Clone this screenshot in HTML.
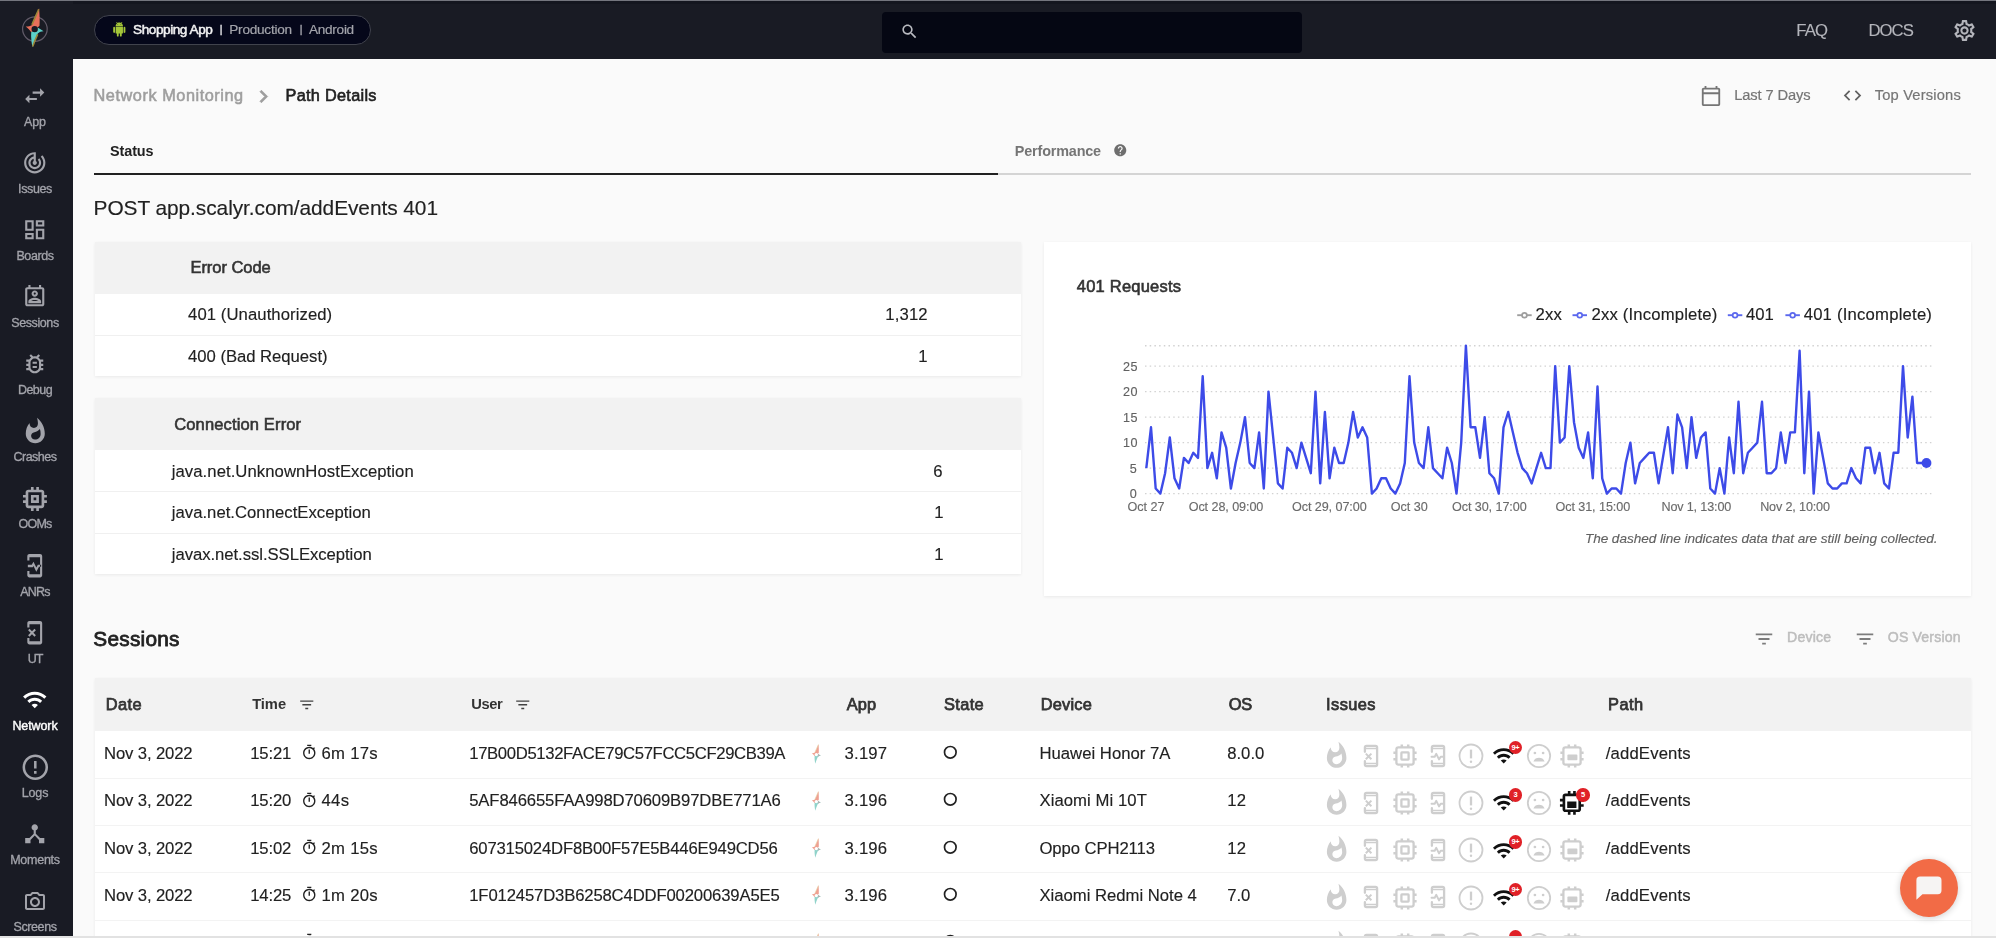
<!DOCTYPE html>
<html lang="en"><head><meta charset="utf-8"><title>Path Details</title>
<style>
html,body{margin:0;padding:0}
body{width:1996px;height:938px;overflow:hidden;background:#fafafa;position:relative;font-family:"Liberation Sans", sans-serif;}
.r{position:absolute}
.tl{position:absolute;left:0;top:0;width:1996px;height:938px;will-change:transform}
.t{position:absolute;white-space:pre;line-height:24px;}
.ic{position:absolute;display:block;overflow:visible}
svg text{font-family:"Liberation Sans", sans-serif}
</style></head>
<body>
<div class="r" style="left:0px;top:0px;width:1996px;height:59.3px;background:#191b24;"></div>
<div class="r" style="left:0px;top:0px;width:72.5px;height:938px;background:#191b24;"></div>
<div class="r" style="left:0px;top:0px;width:1996px;height:1px;background:#74767e;"></div>
<div class="r" style="left:72.5px;top:1px;width:1923.5px;height:3px;background:#14161f;"></div>
<div class="r" style="left:94px;top:15px;width:274.5px;height:27.5px;border:1px solid #41434d;border-radius:15px;background:#05071a"></div>
<svg class="ic" style="left:111.70px;top:22.30px" width="14.60" height="14.60" viewBox="0 0 24 24" fill="#a4c639"><path d="M6 18c0 .55.45 1 1 1h1v3.5c0 .83.67 1.5 1.5 1.5s1.5-.67 1.5-1.5V19h2v3.5c0 .83.67 1.5 1.5 1.5s1.5-.67 1.5-1.5V19h1c.55 0 1-.45 1-1V8H6v10zM3.5 8C2.67 8 2 8.67 2 9.5v7c0 .83.67 1.5 1.5 1.5S5 17.33 5 16.5v-7C5 8.67 4.33 8 3.5 8zm17 0c-.83 0-1.5.67-1.5 1.5v7c0 .83.67 1.5 1.5 1.5s1.5-.67 1.5-1.5v-7c0-.83-.67-1.5-1.5-1.5zm-4.970-5.840l1.300-1.300c.2-.2.2-.51 0-.71-.2-.2-.51-.2-.71 0l-1.480 1.480C13.850 1.230 12.950 1 12 1c-.96 0-1.860.23-2.660.63L7.850.15c-.2-.2-.51-.2-.71 0-.2.2-.2.51 0 .71l1.310 1.310C6.970 3.260 6 5.010 6 7h12c0-1.990-.97-3.750-2.470-4.840zM10 5H9V4h1v1zm5 0h-1V4h1v1z"/></svg>
<div class="r" style="left:882px;top:12px;width:420px;height:41px;background:#050713;border-radius:4px"></div>
<svg class="ic" style="left:900.00px;top:22.00px" width="19.00" height="19.00" viewBox="0 0 24 24" fill="#b9bac0"><path d="M15.5 14h-.79l-.28-.27C15.41 12.59 16 11.11 16 9.5 16 5.91 13.09 3 9.5 3S3 5.91 3 9.5 5.91 16 9.5 16c1.61 0 3.09-.59 4.23-1.57l.27.28v.79l5 4.99L20.49 19l-4.99-5zm-6 0C7.01 14 5 11.99 5 9.5S7.01 5 9.5 5 14 7.01 14 9.5 11.99 14 9.5 14z"/></svg>
<svg class="ic" style="left:1952.10px;top:18.20px" width="25.00" height="25.00" viewBox="0 0 24 24" fill="#b4b5bb"><path d="M19.43 12.98c.04-.32.07-.64.07-.98 0-.34-.03-.66-.07-.98l2.11-1.65c.19-.15.24-.42.12-.64l-2-3.46c-.09-.16-.26-.25-.44-.25-.06 0-.12.01-.17.03l-2.49 1c-.52-.4-1.08-.73-1.69-.98l-.38-2.65C14.46 2.18 14.25 2 14 2h-4c-.25 0-.46.18-.49.42l-.38 2.65c-.61.25-1.17.59-1.69.98l-2.49-1c-.06-.02-.12-.03-.18-.03-.17 0-.34.09-.43.25l-2 3.46c-.13.22-.07.49.12.64l2.11 1.65c-.04.32-.07.65-.07.98 0 .33.03.66.07.98l-2.11 1.65c-.19.15-.24.42-.12.64l2 3.46c.09.16.26.25.44.25.06 0 .12-.01.17-.03l2.49-1c.52.4 1.08.73 1.69.98l.38 2.65c.03.24.24.42.49.42h4c.25 0 .46-.18.49-.42l.38-2.65c.61-.25 1.17-.59 1.69-.98l2.49 1c.06.02.12.03.18.03.17 0 .34-.09.43-.25l2-3.46c.12-.22.07-.49-.12-.64l-2.11-1.65zm-1.98-1.71c.04.31.05.52.05.73 0 .21-.02.43-.05.73l-.14 1.13.89.7 1.08.84-.7 1.21-1.27-.51-1.04-.42-.9.68c-.43.32-.84.56-1.25.73l-1.06.43-.16 1.13-.2 1.35h-1.4l-.19-1.35-.16-1.13-1.06-.43c-.43-.18-.83-.41-1.23-.71l-.91-.7-1.06.43-1.27.51-.7-1.21 1.08-.84.89-.7-.14-1.13c-.03-.31-.05-.54-.05-.74s.02-.43.05-.73l.14-1.13-.89-.7-1.08-.84.7-1.21 1.27.51 1.04.42.9-.68c.43-.32.84-.56 1.25-.73l1.06-.43.16-1.13.2-1.35h1.39l.19 1.35.16 1.13 1.06.43c.43.18.83.41 1.23.71l.91.7 1.06-.43 1.27-.51.7 1.21-1.07.85-.89.7.14 1.13zM12 8c-2.21 0-4 1.79-4 4s1.79 4 4 4 4-1.79 4-4-1.79-4-4-4zm0 6c-1.1 0-2-.9-2-2s.9-2 2-2 2 .9 2 2-.9 2-2 2z"/></svg>
<svg class="ic" style="left:22.25px;top:83.05px" width="25.50" height="25.50" viewBox="0 0 24 24" fill="#a3a4ab"><path d="M6.99 11L3 15l3.99 4v-3H14v-2H6.99v-3zM21 9l-3.99-4v3H10v2h7.01v3L21 9z"/></svg>
<svg class="ic" style="left:22.25px;top:150.15px" width="25.50" height="25.50" viewBox="0 0 24 24" fill="#a3a4ab"><path d="M19.07 4.93l-1.41 1.41C19.1 7.79 20 9.79 20 12c0 4.42-3.58 8-8 8s-8-3.58-8-8c0-4.08 3.05-7.44 7-7.93v2.02C8.16 6.57 6 9.03 6 12c0 3.31 2.69 6 6 6s6-2.69 6-6c0-1.66-.67-3.16-1.76-4.24l-1.41 1.41C15.55 9.9 16 10.9 16 12c0 2.21-1.79 4-4 4s-4-1.79-4-4c0-1.86 1.28-3.41 3-3.86v2.14c-.6.35-1 .98-1 1.72 0 1.1.9 2 2 2s2-.9 2-2c0-.74-.4-1.38-1-1.72V2h-1C6.48 2 2 6.48 2 12s4.48 10 10 10 10-4.48 10-10c0-2.76-1.12-5.26-2.93-7.07z"/></svg>
<svg class="ic" style="left:22.25px;top:217.25px" width="25.50" height="25.50" viewBox="0 0 24 24" fill="#a3a4ab"><path d="M19 5v2h-4V5h4M9 5v6H5V5h4m10 8v6h-4v-6h4M9 17v2H5v-2h4M21 3h-8v6h8V3zM11 3H3v10h8V3zm10 8h-8v10h8V11zm-10 4H3v6h8v-6z"/></svg>
<svg class="ic" style="left:22.25px;top:284.35px" width="25.50" height="25.50" viewBox="0 0 24 24" fill="#a3a4ab"><path d="M19 3h-1V1h-2v2H8V1H6v2H5c-1.11 0-2 .9-2 2v14c0 1.1.89 2 2 2h14c1.1 0 2-.9 2-2V5c0-1.1-.9-2-2-2zm0 16H5V5h14v14zM12 6c-1.65 0-3 1.35-3 3s1.35 3 3 3 3-1.35 3-3-1.35-3-3-3zm0 4c-.55 0-1-.45-1-1s.45-1 1-1 1 .45 1 1-.45 1-1 1zm6 6.58c0-2.5-3.97-3.58-6-3.58s-6 1.08-6 3.58V18h12v-1.42zM8.48 16c.74-.51 2.23-1 3.52-1s2.78.49 3.52 1H8.48z"/></svg>
<svg class="ic" style="left:22.25px;top:351.45px" width="25.50" height="25.50" viewBox="0 0 24 24" fill="#a3a4ab"><path d="M20 8h-2.81c-.45-.78-1.07-1.45-1.82-1.96L17 4.41 15.59 3l-2.17 2.17C12.96 5.06 12.49 5 12 5s-.96.06-1.41.17L8.41 3 7 4.41l1.62 1.63C7.88 6.55 7.26 7.22 6.81 8H4v2h2.09c-.05.33-.09.66-.09 1v1H4v2h2v1c0 .34.04.67.09 1H4v2h2.81c1.04 1.79 2.97 3 5.19 3s4.15-1.21 5.19-3H20v-2h-2.09c.05-.33.09-.66.09-1v-1h2v-2h-2v-1c0-.34-.04-.67-.09-1H20V8zm-4 4v3c0 .22-.03.47-.07.7l-.1.65-.37.65c-.72 1.24-2.04 2-3.46 2s-2.74-.77-3.46-2l-.37-.64-.1-.65C8.03 15.48 8 15.23 8 15v-4c0-.23.03-.48.07-.7l.1-.65.37-.65c.3-.52.72-.97 1.21-1.31l.57-.39.74-.18c.31-.08.63-.12.94-.12.32 0 .63.04.95.12l.68.16.61.42c.5.34.91.78 1.21 1.31l.38.65.1.65c.04.22.07.47.07.69v1zm-6 2h4v2h-4zm0-4h4v2h-4z"/></svg>
<svg class="ic" style="left:20.72px;top:417.02px" width="28.56" height="28.56" viewBox="0 0 24 24" fill="#a3a4ab"><path d="M13.5.67s.74 2.65.74 4.8c0 2.06-1.35 3.73-3.41 3.73-2.07 0-3.63-1.67-3.63-3.73l.03-.36C5.21 7.51 4 10.62 4 14c0 4.42 3.58 8 8 8s8-3.58 8-8C20 8.61 17.41 3.8 13.5.67zM11.71 19c-1.78 0-3.22-1.4-3.22-3.14 0-1.62 1.05-2.76 2.81-3.12 1.77-.36 3.6-1.21 4.62-2.58.39 1.29.59 2.65.59 4.04 0 2.65-2.15 4.8-4.8 4.8z"/></svg>
<svg class="ic" style="left:19.06px;top:482.86px" width="31.88" height="31.88" viewBox="0 0 24 24" fill="#a3a4ab"><path d="M15 9H9v6h6V9zm-2 4h-2v-2h2v2zm8-2V9h-2V7c0-1.1-.9-2-2-2h-2V3h-2v2h-2V3H9v2H7c-1.1 0-2 .9-2 2v2H3v2h2v2H3v2h2v2c0 1.1.9 2 2 2h2v2h2v-2h2v2h2v-2h2c1.1 0 2-.9 2-2v-2h2v-2h-2v-2h2zm-4 6H7V7h10v10z"/></svg>
<svg class="ic" style="left:22.25px;top:552.75px" width="25.50" height="25.50" viewBox="0 0 24 24" fill="#a3a4ab"><path d="M17 1H7c-1.1 0-2 .9-2 2v4h2V4h10v16H7v-3H5v4c0 1.1.9 2 2 2h10c1.1 0 2-.9 2-2V3c0-1.1-.9-2-2-2zM5.500 11.100h3.700l1.600-2.800 2.700 5.400 1.400-2.600H18v1.900h-2l-2.500 4.600-2.700-5.400-.700 1.200H5.500z"/></svg>
<svg class="ic" style="left:22.25px;top:619.85px" width="25.50" height="25.50" viewBox="0 0 24 24" fill="#a3a4ab"><path d="M17 1H7c-1.1 0-2 .9-2 2v4h2V4h10v16H7v-3H5v4c0 1.1.9 2 2 2h10c1.1 0 2-.9 2-2V3c0-1.1-.9-2-2-2zM7.07 8.33 L13.07 14.33 L11.73 15.67 L5.73 9.67zM11.73 8.33 L13.07 9.67 L7.07 15.67 L5.73 14.33z"/></svg>
<svg class="ic" style="left:22.25px;top:686.95px" width="25.50" height="25.50" viewBox="0 0 24 24" fill="#ffffff"><path d="M1 9l2 2c4.97-4.97 13.03-4.97 18 0l2-2C16.93 2.93 7.08 2.93 1 9zm8 8l3 3 3-3c-1.65-1.66-4.34-1.66-6 0zm-4-4l2 2c2.76-2.76 7.24-2.76 10 0l2-2C15.14 9.14 8.87 9.14 5 13z"/></svg>
<svg class="ic" style="left:19.70px;top:751.80px" width="30.60" height="30.60" viewBox="0 0 24 24" fill="#a3a4ab"><path d="M11 15h2v2h-2zm0-8h2v6h-2zm.99-5C6.47 2 2 6.48 2 12s4.47 10 9.99 10C17.52 22 22 17.52 22 12S17.52 2 11.99 2zM12 20c-4.42 0-8-3.58-8-8s3.58-8 8-8 8 3.58 8 8-3.58 8-8 8z"/></svg>
<svg class="ic" style="left:22.25px;top:821.15px" width="25.50" height="25.50" viewBox="0 0 24 24" fill="#a3a4ab"><path d="M17 16l-4-4V8.82C14.16 8.4 15 7.3 15 6c0-1.66-1.34-3-3-3S9 4.34 9 6c0 1.3.84 2.4 2 2.82V12l-4 4H3v5h5v-3.05l4-4.2 4 4.2V21h5v-5h-4z"/></svg>
<svg class="ic" style="left:23.02px;top:890.21px" width="23.97" height="23.97" viewBox="0 0 24 24" fill="#a3a4ab"><path d="M20 4h-3.17L15 2H9L7.17 4H4c-1.1 0-2 .9-2 2v12c0 1.1.9 2 2 2h16c1.1 0 2-.9 2-2V6c0-1.1-.9-2-2-2zm0 14H4V6h4.05l1.83-2h4.24l1.83 2H20v12zM12 7c-2.76 0-5 2.24-5 5s2.24 5 5 5 5-2.24 5-5-2.24-5-5-5zm0 8c-1.65 0-3-1.35-3-3s1.35-3 3-3 3 1.35 3 3-1.35 3-3 3z"/></svg>
<svg class="ic" style="left:10px;top:0px" width="50" height="60" viewBox="10 0 50 60">
<circle cx="34.9" cy="29.1" r="12.3" fill="none" stroke="#625b69" stroke-width="1.200"/>
<path d="M39.100 8.300C39.600 15 39.900 21 39.500 25.800L37.600 27.400L31.200 32.200C29.500 30 27.800 28 25.700 26.500C28 26.600 30 26.200 31.800 25.200C34 20 36.800 14 39.100 8.300Z" fill="#e7705b"/>
<path d="M43.600 31.300C41.500 31.200 39.600 32 37.800 33.600C35.800 38 33.800 43 32.400 47.300C31.600 42 30.800 37 31.200 32.200L37.600 27.400C39.500 28.500 41.500 29.800 43.600 31.300Z" fill="#5cd0c8"/>
<path d="M38.700 9.300C36.500 14.500 33.900 20 31.900 24.800" stroke="#9c8638" stroke-width="1.600" fill="none"/>
<path d="M37.600 34.300C35.700 38.500 33.900 43 32.700 46.500" stroke="#9c8638" stroke-width="1.600" fill="none"/>
<circle cx="34.700" cy="29.100" r="3.200" fill="#191b24"/>
</svg>
<svg class="ic" style="left:250.50px;top:83.80px" width="25.00" height="25.00" viewBox="0 0 24 24" fill="#9e9e9e" stroke="#9e9e9e" stroke-width="0.7"><path d="M10 6L8.59 7.41 13.17 12l-4.58 4.59L10 18l6-6z"/></svg>
<svg class="ic" style="left:1700.10px;top:84.90px" width="22.00" height="22.00" viewBox="0 0 24 24" fill="#757575"><path d="M20 3h-1V1h-2v2H7V1H5v2H4c-1.1 0-2 .9-2 2v16c0 1.1.9 2 2 2h16c1.1 0 2-.9 2-2V5c0-1.1-.9-2-2-2zm0 18H4V10h16v11zm0-13H4V5h16v3z"/></svg>
<svg class="ic" style="left:1841.90px;top:85.20px" width="21.00" height="21.00" viewBox="0 0 24 24" fill="#616161"><path d="M9.4 16.6L4.8 12l4.6-4.6L8 6l-6 6 6 6 1.4-1.4zm5.2 0l4.6-4.6-4.6-4.6L16 6l6 6-6 6-1.4-1.4z"/></svg>
<svg class="ic" style="left:1113.15px;top:142.75px" width="14.50" height="14.50" viewBox="0 0 24 24" fill="#6e6e6e"><path d="M12 2C6.48 2 2 6.48 2 12s4.48 10 10 10 10-4.48 10-10S17.52 2 12 2zm1 17h-2v-2h2v2zm2.07-7.75l-.9.92C13.45 12.9 13 13.5 13 15h-2v-.5c0-1.1.45-2.1 1.17-2.83l1.24-1.26c.37-.36.59-.86.59-1.41 0-1.1-.9-2-2-2s-2 .9-2 2H8c0-2.21 1.79-4 4-4s4 1.79 4 4c0 .88-.36 1.68-.93 2.25z"/></svg>
<div class="r" style="left:94px;top:172.6px;width:904px;height:2.2px;background:#212121;"></div>
<div class="r" style="left:998px;top:172.6px;width:973px;height:2.2px;background:#d4d4d4;"></div>
<div class="r" style="left:94.5px;top:241.7px;width:926.5px;height:134.5px;background:#fff;box-shadow:0 1px 3px rgba(0,0,0,0.07)"></div>
<div class="r" style="left:94.5px;top:241.7px;width:926.5px;height:52px;background:#f2f2f2;"></div>
<div class="r" style="left:94.5px;top:334.7px;width:926.5px;height:1px;background:#f0f0f0;"></div>
<div class="r" style="left:94.5px;top:397.5px;width:926.5px;height:176.5px;background:#fff;box-shadow:0 1px 3px rgba(0,0,0,0.07)"></div>
<div class="r" style="left:94.5px;top:397.5px;width:926.5px;height:52.5px;background:#f2f2f2;"></div>
<div class="r" style="left:94.5px;top:491px;width:926.5px;height:1px;background:#f0f0f0;"></div>
<div class="r" style="left:94.5px;top:532.5px;width:926.5px;height:1px;background:#f0f0f0;"></div>
<div class="r" style="left:1044px;top:242px;width:926.5px;height:354.2px;background:#fff;box-shadow:0 1px 3px rgba(0,0,0,0.07)"></div>
<svg class="ic" style="left:0;top:0" width="1996" height="938" viewBox="0 0 1996 938">
<line x1="1517.2" y1="315.2" x2="1531.7" y2="315.2" stroke="#9e9e9e" stroke-width="1.9"/><circle cx="1524.45" cy="315.2" r="2.400" fill="#fff" stroke="#9e9e9e" stroke-width="1.700"/>
<line x1="1572.5" y1="315.2" x2="1587.0" y2="315.2" stroke="#5b68ee" stroke-width="1.9"/><circle cx="1579.75" cy="315.2" r="2.400" fill="#fff" stroke="#5b68ee" stroke-width="1.700"/>
<line x1="1727.8" y1="315.2" x2="1742.3" y2="315.2" stroke="#5b68ee" stroke-width="1.9"/><circle cx="1735.05" cy="315.2" r="2.400" fill="#fff" stroke="#5b68ee" stroke-width="1.700"/>
<line x1="1785.4" y1="315.2" x2="1799.9" y2="315.2" stroke="#5b68ee" stroke-width="1.9"/><circle cx="1792.65" cy="315.2" r="2.400" fill="#fff" stroke="#5b68ee" stroke-width="1.700"/>
<line x1="1145" y1="493.60" x2="1933.5" y2="493.60" stroke="#d2d2d2" stroke-width="1.4" stroke-dasharray="1.5 3.2"/>
<line x1="1145" y1="468.10" x2="1933.5" y2="468.10" stroke="#d2d2d2" stroke-width="1.4" stroke-dasharray="1.5 3.2"/>
<line x1="1145" y1="442.60" x2="1933.5" y2="442.60" stroke="#d2d2d2" stroke-width="1.4" stroke-dasharray="1.5 3.2"/>
<line x1="1145" y1="417.10" x2="1933.5" y2="417.10" stroke="#d2d2d2" stroke-width="1.4" stroke-dasharray="1.5 3.2"/>
<line x1="1145" y1="391.60" x2="1933.5" y2="391.60" stroke="#d2d2d2" stroke-width="1.4" stroke-dasharray="1.5 3.2"/>
<line x1="1145" y1="366.10" x2="1933.5" y2="366.10" stroke="#d2d2d2" stroke-width="1.4" stroke-dasharray="1.5 3.2"/>
<line x1="1145" y1="345.70" x2="1933.5" y2="345.70" stroke="#d2d2d2" stroke-width="1.4" stroke-dasharray="1.5 3.2"/>
<polyline points="1146.30,468.10 1151.00,427.30 1155.70,488.50 1160.40,493.60 1165.10,473.20 1169.80,437.50 1174.50,478.30 1179.20,488.50 1183.90,457.90 1188.60,463.00 1193.30,452.80 1198.00,457.90 1202.70,376.30 1207.40,468.10 1212.10,452.80 1216.80,478.30 1221.50,432.40 1226.20,447.70 1230.90,488.50 1235.60,463.00 1240.30,442.60 1245.00,417.10 1249.70,463.00 1254.40,468.10 1259.10,432.40 1263.80,488.50 1268.50,391.60 1273.20,437.50 1277.90,483.40 1282.60,488.50 1287.30,447.70 1292.00,452.80 1296.70,468.10 1301.40,442.60 1306.10,457.90 1310.80,473.20 1315.50,391.60 1320.20,483.40 1324.90,412.00 1329.60,478.30 1334.30,447.70 1339.00,463.00 1343.70,463.00 1348.40,442.60 1353.10,412.00 1357.80,437.50 1362.50,427.30 1367.20,437.50 1371.90,493.60 1376.60,488.50 1381.30,478.30 1386.00,478.30 1390.70,488.50 1395.40,493.60 1400.10,483.40 1404.80,463.00 1409.50,376.30 1414.20,442.60 1418.90,463.00 1423.60,468.10 1428.30,427.30 1433.00,468.10 1437.70,473.20 1442.40,478.30 1447.10,447.70 1451.80,463.00 1456.50,493.60 1461.20,442.60 1465.90,345.70 1470.60,427.30 1475.30,427.30 1480.00,457.90 1484.70,417.10 1489.40,473.20 1494.10,478.30 1498.80,493.60 1503.50,427.30 1508.20,412.00 1512.90,432.40 1517.60,452.80 1522.30,468.10 1527.00,473.20 1531.70,483.40 1536.40,468.10 1541.10,452.80 1545.80,468.10 1550.50,468.10 1555.20,366.10 1559.90,442.60 1564.60,437.50 1569.30,366.10 1574.00,422.20 1578.70,447.70 1583.40,457.90 1588.10,432.40 1592.80,478.30 1597.50,386.50 1602.20,478.30 1606.90,493.60 1611.60,488.50 1616.30,488.50 1621.00,493.60 1625.70,463.00 1630.40,442.60 1635.10,483.40 1639.80,463.00 1644.50,457.90 1649.20,452.80 1653.90,452.80 1658.60,483.40 1663.30,455.35 1668.00,427.30 1672.70,473.20 1677.40,414.55 1682.10,427.30 1686.80,468.10 1691.50,417.10 1696.20,457.90 1700.90,437.50 1705.60,432.40 1710.30,488.50 1715.00,493.60 1719.70,468.10 1724.40,493.60 1729.10,437.50 1733.80,473.20 1738.50,401.80 1743.20,473.20 1747.90,452.80 1752.60,447.70 1757.30,442.60 1762.00,401.80 1766.70,473.20 1771.40,473.20 1776.10,468.10 1780.80,432.40 1785.50,463.00 1790.20,432.40 1794.90,432.40 1799.60,350.80 1804.30,473.20 1809.00,391.60 1813.70,493.60 1818.40,432.40 1823.10,457.90 1827.80,483.40 1832.50,488.50 1837.20,488.50 1841.90,483.40 1846.60,483.40 1851.30,468.10 1856.00,478.30 1860.70,483.40 1865.40,447.70 1870.10,447.70 1874.80,473.20 1879.50,452.80 1884.20,483.40 1888.90,488.50 1893.60,452.80 1898.30,452.80 1903.00,366.10 1907.70,437.50 1912.40,396.70 1917.10,463.00 1921.80,463.00 1926.50,463.00" fill="none" stroke="#3d4be8" stroke-width="2.4" stroke-linejoin="round"/>
<circle cx="1926.50" cy="463.00" r="4.900" fill="#3d4be8"/>
</svg>
<svg class="ic" style="left:1753.20px;top:627.60px" width="22.00" height="22.00" viewBox="0 0 24 24" fill="#7c7c7c"><path d="M10 18h4v-2h-4v2zM3 6v2h18V6H3zm3 7h12v-2H6v2z"/></svg>
<svg class="ic" style="left:1853.80px;top:627.60px" width="22.00" height="22.00" viewBox="0 0 24 24" fill="#7c7c7c"><path d="M10 18h4v-2h-4v2zM3 6v2h18V6H3zm3 7h12v-2H6v2z"/></svg>
<div class="r" style="left:94.5px;top:677.5px;width:1876.3px;height:262px;background:#fff;box-shadow:0 1px 3px rgba(0,0,0,0.07)"></div>
<div class="r" style="left:94.5px;top:677.5px;width:1876.3px;height:53.2px;background:#f2f2f2;"></div>
<svg class="ic" style="left:298.25px;top:695.85px" width="17.50" height="17.50" viewBox="0 0 24 24" fill="#424242"><path d="M10 18h4v-2h-4v2zM3 6v2h18V6H3zm3 7h12v-2H6v2z"/></svg>
<svg class="ic" style="left:513.85px;top:695.85px" width="17.50" height="17.50" viewBox="0 0 24 24" fill="#424242"><path d="M10 18h4v-2h-4v2zM3 6v2h18V6H3zm3 7h12v-2H6v2z"/></svg>
<svg class="ic" style="left:300.75px;top:744.45px" width="16.50" height="16.50" viewBox="0 0 24 24" fill="#212121"><path d="M15 1H9v2h6V1zm-4 13h2V8h-2v6zm8.03-6.61l1.42-1.42c-.43-.51-.9-.99-1.41-1.41l-1.42 1.42C16.07 4.74 14.12 4 12 4c-4.97 0-9 4.03-9 9s4.020 9 9 9 9-4.030 9-9c0-2.120-.74-4.070-1.970-5.610zM12 20c-3.870 0-7-3.130-7-7s3.130-7 7-7 7 3.130 7 7-3.130 7-7 7z"/></svg>
<svg class="ic" style="left:804.10px;top:739.50px;opacity:0.66" width="25" height="30" viewBox="10 0 50 60">
<path d="M39.100 8.300C39.600 15 39.900 21 39.500 25.800L37.600 27.400L31.200 32.200C29.500 30 27.800 28 25.700 26.500C28 26.600 30 26.200 31.800 25.200C34 20 36.800 14 39.100 8.300Z" fill="#e7705b"/>
<path d="M43.600 31.300C41.500 31.200 39.600 32 37.800 33.600C35.800 38 33.800 43 32.400 47.300C31.600 42 30.800 37 31.200 32.200L37.600 27.400C39.500 28.500 41.500 29.800 43.600 31.300Z" fill="#58bdb0"/>
<path d="M43.600 31.300C41.500 31.200 39.600 32 37.800 33.600L37.600 27.400C39.500 28.500 41.500 29.800 43.600 31.300Z" fill="#8a8a8a"/>
<path d="M38.700 9.300C36.500 14.500 33.900 20 31.900 24.800" stroke="#d9b56a" stroke-width="1.300" fill="none"/>
<circle cx="34.700" cy="29.100" r="3.300" fill="#fff"/></svg>
<svg class="ic" style="left:943.00px;top:745.20px" width="15" height="15" viewBox="0 0 15 15"><circle cx="7.300" cy="7.300" r="5.800" fill="none" stroke="#212121" stroke-width="1.700"/></svg>
<svg class="ic" style="left:1322.35px;top:740.95px" width="29.30" height="29.30" viewBox="0 0 24 24" fill="#cecece"><path d="M13.5.67s.74 2.65.74 4.8c0 2.06-1.35 3.73-3.41 3.73-2.07 0-3.63-1.67-3.63-3.73l.03-.36C5.21 7.51 4 10.62 4 14c0 4.42 3.58 8 8 8s8-3.58 8-8C20 8.61 17.41 3.8 13.5.67zM11.71 19c-1.78 0-3.22-1.4-3.22-3.14 0-1.62 1.05-2.76 2.81-3.12 1.77-.36 3.6-1.21 4.62-2.58.39 1.29.59 2.65.59 4.04 0 2.65-2.15 4.8-4.8 4.8z"/></svg>
<svg class="ic" style="left:1354.60px;top:739.60px" width="32" height="32" viewBox="-16 -16 32 32" fill="none" stroke="#cecece" stroke-width="2.3" stroke-linecap="round" stroke-linejoin="round"><path d="M-6.1 -4.200V-8.6a1.6 1.6 0 0 1 1.6 -1.6H4.5a1.6 1.6 0 0 1 1.6 1.6V8.6a1.6 1.6 0 0 1 -1.6 1.6H-4.5a1.6 1.6 0 0 1 -1.6 -1.6V5.200"/><path d="M-6.1 -7.6H6.1M-6.1 7.6H6.1" stroke-width="1.500"/><path d="M-5.200 -2.400l5.600 5.600M0.400 -2.400l-5.600 5.600" stroke-width="2.000" stroke-linecap="butt"/></svg>
<svg class="ic" style="left:1388.50px;top:739.80px" width="32" height="32" viewBox="-16 -16 32 32" fill="none" stroke="#cecece" stroke-width="2.3" stroke-linecap="round" stroke-linejoin="round"><rect x="-8.6" y="-8.6" width="17.2" height="17.2" rx="2"/><path d="M-3.2 -8.6v-3M-3.2 8.6v3M-8.6 -3.2h-3M8.6 -3.2h3" stroke-width="2.500" stroke-linecap="butt"/><path d="M3.2 -8.6v-3M3.2 8.6v3M-8.6 3.2h-3M8.6 3.2h3" stroke-width="2.500" stroke-linecap="butt"/><rect x="-3.600" y="-3.600" width="7.200" height="7.200" rx="0.500" stroke-width="2.300"/></svg>
<svg class="ic" style="left:1421.50px;top:739.60px" width="32" height="32" viewBox="-16 -16 32 32" fill="none" stroke="#cecece" stroke-width="2.3" stroke-linecap="round" stroke-linejoin="round"><path d="M-6.1 -4.200V-8.6a1.6 1.6 0 0 1 1.6 -1.6H4.5a1.6 1.6 0 0 1 1.6 1.6V8.6a1.6 1.6 0 0 1 -1.6 1.6H-4.5a1.6 1.6 0 0 1 -1.6 -1.6V5.200"/><path d="M-6.1 -7.6H6.1M-6.1 7.6H6.1" stroke-width="1.500"/><path d="M-6.500 0.800h3.200l1.600-3.000 2.700 5.600 1.700-2.600h3.400" stroke-width="1.900"/></svg>
<svg class="ic" style="left:1455.10px;top:739.80px" width="32" height="32" viewBox="-16 -16 32 32" fill="none" stroke="#cecece" stroke-width="1.8" stroke-linecap="round" stroke-linejoin="round"><circle cx="0" cy="0" r="11.500"/><path d="M0 -6.400V2.400" stroke-width="2.300" stroke-linecap="butt"/><circle cx="0" cy="5.700" r="1.200" fill="#cecece" stroke="none"/></svg>
<svg class="ic" style="left:1492.28px;top:744.18px" width="23.44" height="23.44" viewBox="0 0 24 24" fill="#111"><path d="M1 9l2 2c4.97-4.97 13.03-4.97 18 0l2-2C16.93 2.93 7.08 2.93 1 9zm8 8l3 3 3-3c-1.65-1.66-4.34-1.66-6 0zm-4-4l2 2c2.76-2.76 7.24-2.76 10 0l2-2C15.14 9.14 8.87 9.14 5 13z"/></svg>
<div class="r" style="left:1508.70px;top:740.80px;width:13.6px;height:13.6px;border-radius:50%;background:#e02127;color:#fff;font-size:7.5px;font-weight:700;line-height:13.6px;text-align:center;letter-spacing:-0.3px">9+</div>
<svg class="ic" style="left:1522.80px;top:739.80px" width="32" height="32" viewBox="-16 -16 32 32" fill="none" stroke="#cecece" stroke-width="1.8" stroke-linecap="round" stroke-linejoin="round"><circle cx="0" cy="0" r="11.200"/><circle cx="-4.100" cy="-3.000" r="1.350" fill="#cecece" stroke="none"/><circle cx="4.100" cy="-3.000" r="1.350" fill="#cecece" stroke="none"/><path d="M-5.600 5.600C-4.600 2.800 -2.400 1.800 0 1.800C2.400 1.800 4.600 2.800 5.600 5.600Z" fill="#cecece" stroke="none"/></svg>
<svg class="ic" style="left:1556.20px;top:739.80px" width="32" height="32" viewBox="-16 -16 32 32" fill="none" stroke="#cecece" stroke-width="2.3" stroke-linecap="round" stroke-linejoin="round"><rect x="-8.6" y="-8.6" width="17.2" height="17.2" rx="2"/><path d="M-3.2 -8.6v-3M-3.2 8.6v3M-8.6 -3.2h-3M8.6 -3.2h3" stroke-width="2.500" stroke-linecap="butt"/><path d="M3.2 -8.6v-3M3.2 8.6v3M-8.6 3.2h-3M8.6 3.2h3" stroke-width="2.500" stroke-linecap="butt"/><rect x="-4.600" y="-1.400" width="10.000" height="5.600" rx="0.800" fill="#cecece" stroke="none"/></svg>
<div class="r" style="left:94.5px;top:777.8px;width:1876.3px;height:1px;background:#f3f3f3;"></div>
<svg class="ic" style="left:300.75px;top:791.70px" width="16.50" height="16.50" viewBox="0 0 24 24" fill="#212121"><path d="M15 1H9v2h6V1zm-4 13h2V8h-2v6zm8.03-6.61l1.42-1.42c-.43-.51-.9-.99-1.41-1.41l-1.42 1.42C16.07 4.74 14.12 4 12 4c-4.97 0-9 4.03-9 9s4.020 9 9 9 9-4.030 9-9c0-2.120-.74-4.070-1.970-5.610zM12 20c-3.870 0-7-3.130-7-7s3.130-7 7-7 7 3.130 7 7-3.130 7-7 7z"/></svg>
<svg class="ic" style="left:804.10px;top:786.75px;opacity:0.66" width="25" height="30" viewBox="10 0 50 60">
<path d="M39.100 8.300C39.600 15 39.900 21 39.500 25.800L37.600 27.400L31.200 32.200C29.500 30 27.800 28 25.700 26.500C28 26.600 30 26.200 31.800 25.200C34 20 36.800 14 39.100 8.300Z" fill="#e7705b"/>
<path d="M43.600 31.300C41.500 31.200 39.600 32 37.800 33.600C35.800 38 33.800 43 32.400 47.300C31.600 42 30.800 37 31.200 32.200L37.600 27.400C39.500 28.500 41.500 29.800 43.600 31.300Z" fill="#58bdb0"/>
<path d="M43.600 31.300C41.500 31.200 39.600 32 37.800 33.600L37.600 27.400C39.500 28.500 41.500 29.800 43.600 31.300Z" fill="#8a8a8a"/>
<path d="M38.700 9.300C36.500 14.500 33.900 20 31.900 24.800" stroke="#d9b56a" stroke-width="1.300" fill="none"/>
<circle cx="34.700" cy="29.100" r="3.300" fill="#fff"/></svg>
<svg class="ic" style="left:943.00px;top:792.45px" width="15" height="15" viewBox="0 0 15 15"><circle cx="7.300" cy="7.300" r="5.800" fill="none" stroke="#212121" stroke-width="1.700"/></svg>
<svg class="ic" style="left:1322.35px;top:788.20px" width="29.30" height="29.30" viewBox="0 0 24 24" fill="#cecece"><path d="M13.5.67s.74 2.65.74 4.8c0 2.06-1.35 3.73-3.41 3.73-2.07 0-3.63-1.67-3.63-3.73l.03-.36C5.21 7.51 4 10.62 4 14c0 4.42 3.58 8 8 8s8-3.58 8-8C20 8.61 17.41 3.8 13.5.67zM11.71 19c-1.78 0-3.22-1.4-3.22-3.14 0-1.62 1.05-2.76 2.81-3.12 1.77-.36 3.6-1.21 4.62-2.58.39 1.29.59 2.65.59 4.04 0 2.65-2.15 4.8-4.8 4.8z"/></svg>
<svg class="ic" style="left:1354.60px;top:786.85px" width="32" height="32" viewBox="-16 -16 32 32" fill="none" stroke="#cecece" stroke-width="2.3" stroke-linecap="round" stroke-linejoin="round"><path d="M-6.1 -4.200V-8.6a1.6 1.6 0 0 1 1.6 -1.6H4.5a1.6 1.6 0 0 1 1.6 1.6V8.6a1.6 1.6 0 0 1 -1.6 1.6H-4.5a1.6 1.6 0 0 1 -1.6 -1.6V5.200"/><path d="M-6.1 -7.6H6.1M-6.1 7.6H6.1" stroke-width="1.500"/><path d="M-5.200 -2.400l5.600 5.600M0.400 -2.400l-5.600 5.600" stroke-width="2.000" stroke-linecap="butt"/></svg>
<svg class="ic" style="left:1388.50px;top:787.05px" width="32" height="32" viewBox="-16 -16 32 32" fill="none" stroke="#cecece" stroke-width="2.3" stroke-linecap="round" stroke-linejoin="round"><rect x="-8.6" y="-8.6" width="17.2" height="17.2" rx="2"/><path d="M-3.2 -8.6v-3M-3.2 8.6v3M-8.6 -3.2h-3M8.6 -3.2h3" stroke-width="2.500" stroke-linecap="butt"/><path d="M3.2 -8.6v-3M3.2 8.6v3M-8.6 3.2h-3M8.6 3.2h3" stroke-width="2.500" stroke-linecap="butt"/><rect x="-3.600" y="-3.600" width="7.200" height="7.200" rx="0.500" stroke-width="2.300"/></svg>
<svg class="ic" style="left:1421.50px;top:786.85px" width="32" height="32" viewBox="-16 -16 32 32" fill="none" stroke="#cecece" stroke-width="2.3" stroke-linecap="round" stroke-linejoin="round"><path d="M-6.1 -4.200V-8.6a1.6 1.6 0 0 1 1.6 -1.6H4.5a1.6 1.6 0 0 1 1.6 1.6V8.6a1.6 1.6 0 0 1 -1.6 1.6H-4.5a1.6 1.6 0 0 1 -1.6 -1.6V5.200"/><path d="M-6.1 -7.6H6.1M-6.1 7.6H6.1" stroke-width="1.500"/><path d="M-6.500 0.800h3.200l1.600-3.000 2.700 5.600 1.700-2.600h3.400" stroke-width="1.900"/></svg>
<svg class="ic" style="left:1455.10px;top:787.05px" width="32" height="32" viewBox="-16 -16 32 32" fill="none" stroke="#cecece" stroke-width="1.8" stroke-linecap="round" stroke-linejoin="round"><circle cx="0" cy="0" r="11.500"/><path d="M0 -6.400V2.400" stroke-width="2.300" stroke-linecap="butt"/><circle cx="0" cy="5.700" r="1.200" fill="#cecece" stroke="none"/></svg>
<svg class="ic" style="left:1492.28px;top:791.43px" width="23.44" height="23.44" viewBox="0 0 24 24" fill="#111"><path d="M1 9l2 2c4.97-4.97 13.03-4.97 18 0l2-2C16.93 2.93 7.08 2.93 1 9zm8 8l3 3 3-3c-1.65-1.66-4.34-1.66-6 0zm-4-4l2 2c2.76-2.76 7.24-2.76 10 0l2-2C15.14 9.14 8.87 9.14 5 13z"/></svg>
<div class="r" style="left:1508.70px;top:788.05px;width:13.6px;height:13.6px;border-radius:50%;background:#e02127;color:#fff;font-size:7.5px;font-weight:700;line-height:13.6px;text-align:center;letter-spacing:-0.3px">3</div>
<svg class="ic" style="left:1522.80px;top:787.05px" width="32" height="32" viewBox="-16 -16 32 32" fill="none" stroke="#cecece" stroke-width="1.8" stroke-linecap="round" stroke-linejoin="round"><circle cx="0" cy="0" r="11.200"/><circle cx="-4.100" cy="-3.000" r="1.350" fill="#cecece" stroke="none"/><circle cx="4.100" cy="-3.000" r="1.350" fill="#cecece" stroke="none"/><path d="M-5.600 5.600C-4.600 2.800 -2.400 1.800 0 1.800C2.400 1.800 4.600 2.800 5.600 5.600Z" fill="#cecece" stroke="none"/></svg>
<svg class="ic" style="left:1556.28px;top:787.03px" width="31.64" height="31.64" viewBox="0 0 24 24" fill="#111"><path d="M8.5 11h7v5h-7zM21 11V9h-2V7c0-1.1-.9-2-2-2h-2V3h-2v2h-2V3H9v2H7c-1.1 0-2 .9-2 2v2H3v2h2v2H3v2h2v2c0 1.1.9 2 2 2h2v2h2v-2h2v2h2v-2h2c1.1 0 2-.9 2-2v-2h2v-2h-2v-2h2zm-4 6H7V7h10v10z"/></svg>
<div class="r" style="left:1576.10px;top:788.05px;width:13.6px;height:13.6px;border-radius:50%;background:#e02127;color:#fff;font-size:7.5px;font-weight:700;line-height:13.6px;text-align:center;letter-spacing:-0.3px">5</div>
<div class="r" style="left:94.5px;top:825.1px;width:1876.3px;height:1px;background:#f3f3f3;"></div>
<svg class="ic" style="left:300.75px;top:838.95px" width="16.50" height="16.50" viewBox="0 0 24 24" fill="#212121"><path d="M15 1H9v2h6V1zm-4 13h2V8h-2v6zm8.03-6.61l1.42-1.42c-.43-.51-.9-.99-1.41-1.41l-1.42 1.42C16.07 4.74 14.12 4 12 4c-4.97 0-9 4.03-9 9s4.020 9 9 9 9-4.030 9-9c0-2.120-.74-4.070-1.970-5.610zM12 20c-3.870 0-7-3.130-7-7s3.130-7 7-7 7 3.130 7 7-3.130 7-7 7z"/></svg>
<svg class="ic" style="left:804.10px;top:834.00px;opacity:0.66" width="25" height="30" viewBox="10 0 50 60">
<path d="M39.100 8.300C39.600 15 39.900 21 39.500 25.800L37.600 27.400L31.200 32.200C29.500 30 27.800 28 25.700 26.500C28 26.600 30 26.200 31.800 25.200C34 20 36.800 14 39.100 8.300Z" fill="#e7705b"/>
<path d="M43.600 31.300C41.500 31.200 39.600 32 37.800 33.600C35.800 38 33.800 43 32.400 47.300C31.600 42 30.800 37 31.200 32.200L37.600 27.400C39.500 28.500 41.500 29.800 43.600 31.300Z" fill="#58bdb0"/>
<path d="M43.600 31.300C41.500 31.200 39.600 32 37.800 33.600L37.600 27.400C39.500 28.500 41.500 29.800 43.600 31.300Z" fill="#8a8a8a"/>
<path d="M38.700 9.300C36.500 14.500 33.900 20 31.900 24.800" stroke="#d9b56a" stroke-width="1.300" fill="none"/>
<circle cx="34.700" cy="29.100" r="3.300" fill="#fff"/></svg>
<svg class="ic" style="left:943.00px;top:839.70px" width="15" height="15" viewBox="0 0 15 15"><circle cx="7.300" cy="7.300" r="5.800" fill="none" stroke="#212121" stroke-width="1.700"/></svg>
<svg class="ic" style="left:1322.35px;top:835.45px" width="29.30" height="29.30" viewBox="0 0 24 24" fill="#cecece"><path d="M13.5.67s.74 2.65.74 4.8c0 2.06-1.35 3.73-3.41 3.73-2.07 0-3.63-1.67-3.63-3.73l.03-.36C5.21 7.51 4 10.62 4 14c0 4.42 3.58 8 8 8s8-3.58 8-8C20 8.61 17.41 3.8 13.5.67zM11.71 19c-1.78 0-3.22-1.4-3.22-3.14 0-1.62 1.05-2.76 2.81-3.12 1.77-.36 3.6-1.21 4.62-2.58.39 1.29.59 2.65.59 4.04 0 2.65-2.15 4.8-4.8 4.8z"/></svg>
<svg class="ic" style="left:1354.60px;top:834.10px" width="32" height="32" viewBox="-16 -16 32 32" fill="none" stroke="#cecece" stroke-width="2.3" stroke-linecap="round" stroke-linejoin="round"><path d="M-6.1 -4.200V-8.6a1.6 1.6 0 0 1 1.6 -1.6H4.5a1.6 1.6 0 0 1 1.6 1.6V8.6a1.6 1.6 0 0 1 -1.6 1.6H-4.5a1.6 1.6 0 0 1 -1.6 -1.6V5.200"/><path d="M-6.1 -7.6H6.1M-6.1 7.6H6.1" stroke-width="1.500"/><path d="M-5.200 -2.400l5.600 5.600M0.400 -2.400l-5.600 5.600" stroke-width="2.000" stroke-linecap="butt"/></svg>
<svg class="ic" style="left:1388.50px;top:834.30px" width="32" height="32" viewBox="-16 -16 32 32" fill="none" stroke="#cecece" stroke-width="2.3" stroke-linecap="round" stroke-linejoin="round"><rect x="-8.6" y="-8.6" width="17.2" height="17.2" rx="2"/><path d="M-3.2 -8.6v-3M-3.2 8.6v3M-8.6 -3.2h-3M8.6 -3.2h3" stroke-width="2.500" stroke-linecap="butt"/><path d="M3.2 -8.6v-3M3.2 8.6v3M-8.6 3.2h-3M8.6 3.2h3" stroke-width="2.500" stroke-linecap="butt"/><rect x="-3.600" y="-3.600" width="7.200" height="7.200" rx="0.500" stroke-width="2.300"/></svg>
<svg class="ic" style="left:1421.50px;top:834.10px" width="32" height="32" viewBox="-16 -16 32 32" fill="none" stroke="#cecece" stroke-width="2.3" stroke-linecap="round" stroke-linejoin="round"><path d="M-6.1 -4.200V-8.6a1.6 1.6 0 0 1 1.6 -1.6H4.5a1.6 1.6 0 0 1 1.6 1.6V8.6a1.6 1.6 0 0 1 -1.6 1.6H-4.5a1.6 1.6 0 0 1 -1.6 -1.6V5.200"/><path d="M-6.1 -7.6H6.1M-6.1 7.6H6.1" stroke-width="1.500"/><path d="M-6.500 0.800h3.200l1.600-3.000 2.700 5.600 1.700-2.600h3.400" stroke-width="1.900"/></svg>
<svg class="ic" style="left:1455.10px;top:834.30px" width="32" height="32" viewBox="-16 -16 32 32" fill="none" stroke="#cecece" stroke-width="1.8" stroke-linecap="round" stroke-linejoin="round"><circle cx="0" cy="0" r="11.500"/><path d="M0 -6.400V2.400" stroke-width="2.300" stroke-linecap="butt"/><circle cx="0" cy="5.700" r="1.200" fill="#cecece" stroke="none"/></svg>
<svg class="ic" style="left:1492.28px;top:838.68px" width="23.44" height="23.44" viewBox="0 0 24 24" fill="#111"><path d="M1 9l2 2c4.97-4.97 13.03-4.97 18 0l2-2C16.93 2.93 7.08 2.93 1 9zm8 8l3 3 3-3c-1.65-1.66-4.34-1.66-6 0zm-4-4l2 2c2.76-2.76 7.24-2.76 10 0l2-2C15.14 9.14 8.87 9.14 5 13z"/></svg>
<div class="r" style="left:1508.70px;top:835.30px;width:13.6px;height:13.6px;border-radius:50%;background:#e02127;color:#fff;font-size:7.5px;font-weight:700;line-height:13.6px;text-align:center;letter-spacing:-0.3px">9+</div>
<svg class="ic" style="left:1522.80px;top:834.30px" width="32" height="32" viewBox="-16 -16 32 32" fill="none" stroke="#cecece" stroke-width="1.8" stroke-linecap="round" stroke-linejoin="round"><circle cx="0" cy="0" r="11.200"/><circle cx="-4.100" cy="-3.000" r="1.350" fill="#cecece" stroke="none"/><circle cx="4.100" cy="-3.000" r="1.350" fill="#cecece" stroke="none"/><path d="M-5.600 5.600C-4.600 2.800 -2.400 1.800 0 1.800C2.400 1.800 4.600 2.800 5.600 5.600Z" fill="#cecece" stroke="none"/></svg>
<svg class="ic" style="left:1556.20px;top:834.30px" width="32" height="32" viewBox="-16 -16 32 32" fill="none" stroke="#cecece" stroke-width="2.3" stroke-linecap="round" stroke-linejoin="round"><rect x="-8.6" y="-8.6" width="17.2" height="17.2" rx="2"/><path d="M-3.2 -8.6v-3M-3.2 8.6v3M-8.6 -3.2h-3M8.6 -3.2h3" stroke-width="2.500" stroke-linecap="butt"/><path d="M3.2 -8.6v-3M3.2 8.6v3M-8.6 3.2h-3M8.6 3.2h3" stroke-width="2.500" stroke-linecap="butt"/><rect x="-4.600" y="-1.400" width="10.000" height="5.600" rx="0.800" fill="#cecece" stroke="none"/></svg>
<div class="r" style="left:94.5px;top:872.4px;width:1876.3px;height:1px;background:#f3f3f3;"></div>
<svg class="ic" style="left:300.75px;top:886.20px" width="16.50" height="16.50" viewBox="0 0 24 24" fill="#212121"><path d="M15 1H9v2h6V1zm-4 13h2V8h-2v6zm8.03-6.61l1.42-1.42c-.43-.51-.9-.99-1.41-1.41l-1.42 1.42C16.07 4.74 14.12 4 12 4c-4.97 0-9 4.03-9 9s4.020 9 9 9 9-4.030 9-9c0-2.120-.74-4.070-1.970-5.610zM12 20c-3.870 0-7-3.130-7-7s3.130-7 7-7 7 3.130 7 7-3.130 7-7 7z"/></svg>
<svg class="ic" style="left:804.10px;top:881.25px;opacity:0.66" width="25" height="30" viewBox="10 0 50 60">
<path d="M39.100 8.300C39.600 15 39.900 21 39.500 25.800L37.600 27.400L31.200 32.200C29.500 30 27.800 28 25.700 26.500C28 26.600 30 26.200 31.800 25.200C34 20 36.800 14 39.100 8.300Z" fill="#e7705b"/>
<path d="M43.600 31.300C41.500 31.200 39.600 32 37.800 33.600C35.800 38 33.800 43 32.400 47.300C31.600 42 30.800 37 31.200 32.200L37.600 27.400C39.500 28.500 41.500 29.800 43.600 31.300Z" fill="#58bdb0"/>
<path d="M43.600 31.300C41.500 31.200 39.600 32 37.800 33.600L37.600 27.400C39.500 28.500 41.500 29.800 43.600 31.300Z" fill="#8a8a8a"/>
<path d="M38.700 9.300C36.500 14.500 33.900 20 31.900 24.800" stroke="#d9b56a" stroke-width="1.300" fill="none"/>
<circle cx="34.700" cy="29.100" r="3.300" fill="#fff"/></svg>
<svg class="ic" style="left:943.00px;top:886.95px" width="15" height="15" viewBox="0 0 15 15"><circle cx="7.300" cy="7.300" r="5.800" fill="none" stroke="#212121" stroke-width="1.700"/></svg>
<svg class="ic" style="left:1322.35px;top:882.70px" width="29.30" height="29.30" viewBox="0 0 24 24" fill="#cecece"><path d="M13.5.67s.74 2.65.74 4.8c0 2.06-1.35 3.73-3.41 3.73-2.07 0-3.63-1.67-3.63-3.73l.03-.36C5.21 7.51 4 10.62 4 14c0 4.42 3.58 8 8 8s8-3.58 8-8C20 8.61 17.41 3.8 13.5.67zM11.71 19c-1.78 0-3.22-1.4-3.22-3.14 0-1.62 1.05-2.76 2.81-3.12 1.77-.36 3.6-1.21 4.62-2.58.39 1.29.59 2.65.59 4.04 0 2.65-2.15 4.8-4.8 4.8z"/></svg>
<svg class="ic" style="left:1354.60px;top:881.35px" width="32" height="32" viewBox="-16 -16 32 32" fill="none" stroke="#cecece" stroke-width="2.3" stroke-linecap="round" stroke-linejoin="round"><path d="M-6.1 -4.200V-8.6a1.6 1.6 0 0 1 1.6 -1.6H4.5a1.6 1.6 0 0 1 1.6 1.6V8.6a1.6 1.6 0 0 1 -1.6 1.6H-4.5a1.6 1.6 0 0 1 -1.6 -1.6V5.200"/><path d="M-6.1 -7.6H6.1M-6.1 7.6H6.1" stroke-width="1.500"/><path d="M-5.200 -2.400l5.600 5.600M0.400 -2.400l-5.600 5.600" stroke-width="2.000" stroke-linecap="butt"/></svg>
<svg class="ic" style="left:1388.50px;top:881.55px" width="32" height="32" viewBox="-16 -16 32 32" fill="none" stroke="#cecece" stroke-width="2.3" stroke-linecap="round" stroke-linejoin="round"><rect x="-8.6" y="-8.6" width="17.2" height="17.2" rx="2"/><path d="M-3.2 -8.6v-3M-3.2 8.6v3M-8.6 -3.2h-3M8.6 -3.2h3" stroke-width="2.500" stroke-linecap="butt"/><path d="M3.2 -8.6v-3M3.2 8.6v3M-8.6 3.2h-3M8.6 3.2h3" stroke-width="2.500" stroke-linecap="butt"/><rect x="-3.600" y="-3.600" width="7.200" height="7.200" rx="0.500" stroke-width="2.300"/></svg>
<svg class="ic" style="left:1421.50px;top:881.35px" width="32" height="32" viewBox="-16 -16 32 32" fill="none" stroke="#cecece" stroke-width="2.3" stroke-linecap="round" stroke-linejoin="round"><path d="M-6.1 -4.200V-8.6a1.6 1.6 0 0 1 1.6 -1.6H4.5a1.6 1.6 0 0 1 1.6 1.6V8.6a1.6 1.6 0 0 1 -1.6 1.6H-4.5a1.6 1.6 0 0 1 -1.6 -1.6V5.200"/><path d="M-6.1 -7.6H6.1M-6.1 7.6H6.1" stroke-width="1.500"/><path d="M-6.500 0.800h3.200l1.600-3.000 2.700 5.600 1.700-2.600h3.400" stroke-width="1.900"/></svg>
<svg class="ic" style="left:1455.10px;top:881.55px" width="32" height="32" viewBox="-16 -16 32 32" fill="none" stroke="#cecece" stroke-width="1.8" stroke-linecap="round" stroke-linejoin="round"><circle cx="0" cy="0" r="11.500"/><path d="M0 -6.400V2.400" stroke-width="2.300" stroke-linecap="butt"/><circle cx="0" cy="5.700" r="1.200" fill="#cecece" stroke="none"/></svg>
<svg class="ic" style="left:1492.28px;top:885.93px" width="23.44" height="23.44" viewBox="0 0 24 24" fill="#111"><path d="M1 9l2 2c4.97-4.97 13.03-4.97 18 0l2-2C16.93 2.93 7.08 2.93 1 9zm8 8l3 3 3-3c-1.65-1.66-4.34-1.66-6 0zm-4-4l2 2c2.76-2.76 7.24-2.76 10 0l2-2C15.14 9.14 8.87 9.14 5 13z"/></svg>
<div class="r" style="left:1508.70px;top:882.55px;width:13.6px;height:13.6px;border-radius:50%;background:#e02127;color:#fff;font-size:7.5px;font-weight:700;line-height:13.6px;text-align:center;letter-spacing:-0.3px">9+</div>
<svg class="ic" style="left:1522.80px;top:881.55px" width="32" height="32" viewBox="-16 -16 32 32" fill="none" stroke="#cecece" stroke-width="1.8" stroke-linecap="round" stroke-linejoin="round"><circle cx="0" cy="0" r="11.200"/><circle cx="-4.100" cy="-3.000" r="1.350" fill="#cecece" stroke="none"/><circle cx="4.100" cy="-3.000" r="1.350" fill="#cecece" stroke="none"/><path d="M-5.600 5.600C-4.600 2.800 -2.400 1.800 0 1.800C2.400 1.800 4.600 2.800 5.600 5.600Z" fill="#cecece" stroke="none"/></svg>
<svg class="ic" style="left:1556.20px;top:881.55px" width="32" height="32" viewBox="-16 -16 32 32" fill="none" stroke="#cecece" stroke-width="2.3" stroke-linecap="round" stroke-linejoin="round"><rect x="-8.6" y="-8.6" width="17.2" height="17.2" rx="2"/><path d="M-3.2 -8.6v-3M-3.2 8.6v3M-8.6 -3.2h-3M8.6 -3.2h3" stroke-width="2.500" stroke-linecap="butt"/><path d="M3.2 -8.6v-3M3.2 8.6v3M-8.6 3.2h-3M8.6 3.2h3" stroke-width="2.500" stroke-linecap="butt"/><rect x="-4.600" y="-1.400" width="10.000" height="5.600" rx="0.800" fill="#cecece" stroke="none"/></svg>
<div class="r" style="left:94.5px;top:919.7px;width:1876.3px;height:1px;background:#f3f3f3;"></div>
<svg class="ic" style="left:300.75px;top:933.45px" width="16.50" height="16.50" viewBox="0 0 24 24" fill="#212121"><path d="M15 1H9v2h6V1zm-4 13h2V8h-2v6zm8.03-6.61l1.42-1.42c-.43-.51-.9-.99-1.41-1.41l-1.42 1.42C16.07 4.74 14.12 4 12 4c-4.97 0-9 4.03-9 9s4.020 9 9 9 9-4.030 9-9c0-2.120-.74-4.070-1.970-5.610zM12 20c-3.870 0-7-3.130-7-7s3.130-7 7-7 7 3.130 7 7-3.130 7-7 7z"/></svg>
<svg class="ic" style="left:804.10px;top:928.50px;opacity:0.66" width="25" height="30" viewBox="10 0 50 60">
<path d="M39.100 8.300C39.600 15 39.900 21 39.500 25.800L37.600 27.400L31.200 32.200C29.500 30 27.800 28 25.700 26.500C28 26.600 30 26.200 31.800 25.200C34 20 36.800 14 39.100 8.300Z" fill="#e7705b"/>
<path d="M43.600 31.300C41.500 31.200 39.600 32 37.800 33.600C35.800 38 33.800 43 32.400 47.300C31.600 42 30.800 37 31.200 32.200L37.600 27.400C39.500 28.500 41.500 29.800 43.600 31.300Z" fill="#58bdb0"/>
<path d="M43.600 31.300C41.500 31.200 39.600 32 37.800 33.600L37.600 27.400C39.500 28.500 41.500 29.800 43.600 31.300Z" fill="#8a8a8a"/>
<path d="M38.700 9.300C36.500 14.500 33.900 20 31.900 24.800" stroke="#d9b56a" stroke-width="1.300" fill="none"/>
<circle cx="34.700" cy="29.100" r="3.300" fill="#fff"/></svg>
<svg class="ic" style="left:943.00px;top:934.20px" width="15" height="15" viewBox="0 0 15 15"><circle cx="7.300" cy="7.300" r="5.800" fill="none" stroke="#212121" stroke-width="1.700"/></svg>
<svg class="ic" style="left:1322.35px;top:929.95px" width="29.30" height="29.30" viewBox="0 0 24 24" fill="#cecece"><path d="M13.5.67s.74 2.65.74 4.8c0 2.06-1.35 3.73-3.41 3.73-2.07 0-3.63-1.67-3.63-3.73l.03-.36C5.21 7.51 4 10.62 4 14c0 4.42 3.58 8 8 8s8-3.58 8-8C20 8.61 17.41 3.8 13.5.67zM11.71 19c-1.78 0-3.22-1.4-3.22-3.14 0-1.62 1.05-2.76 2.81-3.12 1.77-.36 3.6-1.21 4.62-2.58.39 1.29.59 2.65.59 4.04 0 2.65-2.15 4.8-4.8 4.8z"/></svg>
<svg class="ic" style="left:1354.60px;top:928.60px" width="32" height="32" viewBox="-16 -16 32 32" fill="none" stroke="#cecece" stroke-width="2.3" stroke-linecap="round" stroke-linejoin="round"><path d="M-6.1 -4.200V-8.6a1.6 1.6 0 0 1 1.6 -1.6H4.5a1.6 1.6 0 0 1 1.6 1.6V8.6a1.6 1.6 0 0 1 -1.6 1.6H-4.5a1.6 1.6 0 0 1 -1.6 -1.6V5.200"/><path d="M-6.1 -7.6H6.1M-6.1 7.6H6.1" stroke-width="1.500"/><path d="M-5.200 -2.400l5.600 5.600M0.400 -2.400l-5.600 5.600" stroke-width="2.000" stroke-linecap="butt"/></svg>
<svg class="ic" style="left:1388.50px;top:928.80px" width="32" height="32" viewBox="-16 -16 32 32" fill="none" stroke="#cecece" stroke-width="2.3" stroke-linecap="round" stroke-linejoin="round"><rect x="-8.6" y="-8.6" width="17.2" height="17.2" rx="2"/><path d="M-3.2 -8.6v-3M-3.2 8.6v3M-8.6 -3.2h-3M8.6 -3.2h3" stroke-width="2.500" stroke-linecap="butt"/><path d="M3.2 -8.6v-3M3.2 8.6v3M-8.6 3.2h-3M8.6 3.2h3" stroke-width="2.500" stroke-linecap="butt"/><rect x="-3.600" y="-3.600" width="7.200" height="7.200" rx="0.500" stroke-width="2.300"/></svg>
<svg class="ic" style="left:1421.50px;top:928.60px" width="32" height="32" viewBox="-16 -16 32 32" fill="none" stroke="#cecece" stroke-width="2.3" stroke-linecap="round" stroke-linejoin="round"><path d="M-6.1 -4.200V-8.6a1.6 1.6 0 0 1 1.6 -1.6H4.5a1.6 1.6 0 0 1 1.6 1.6V8.6a1.6 1.6 0 0 1 -1.6 1.6H-4.5a1.6 1.6 0 0 1 -1.6 -1.6V5.200"/><path d="M-6.1 -7.6H6.1M-6.1 7.6H6.1" stroke-width="1.500"/><path d="M-6.500 0.800h3.200l1.600-3.000 2.700 5.600 1.700-2.600h3.400" stroke-width="1.900"/></svg>
<svg class="ic" style="left:1455.10px;top:928.80px" width="32" height="32" viewBox="-16 -16 32 32" fill="none" stroke="#cecece" stroke-width="1.8" stroke-linecap="round" stroke-linejoin="round"><circle cx="0" cy="0" r="11.500"/><path d="M0 -6.400V2.400" stroke-width="2.300" stroke-linecap="butt"/><circle cx="0" cy="5.700" r="1.200" fill="#cecece" stroke="none"/></svg>
<svg class="ic" style="left:1492.28px;top:933.18px" width="23.44" height="23.44" viewBox="0 0 24 24" fill="#111"><path d="M1 9l2 2c4.97-4.97 13.03-4.97 18 0l2-2C16.93 2.93 7.08 2.93 1 9zm8 8l3 3 3-3c-1.65-1.66-4.34-1.66-6 0zm-4-4l2 2c2.76-2.76 7.24-2.76 10 0l2-2C15.14 9.14 8.87 9.14 5 13z"/></svg>
<div class="r" style="left:1508.70px;top:929.80px;width:13.6px;height:13.6px;border-radius:50%;background:#e02127;color:#fff;font-size:7.5px;font-weight:700;line-height:13.6px;text-align:center;letter-spacing:-0.3px"></div>
<svg class="ic" style="left:1522.80px;top:928.80px" width="32" height="32" viewBox="-16 -16 32 32" fill="none" stroke="#cecece" stroke-width="1.8" stroke-linecap="round" stroke-linejoin="round"><circle cx="0" cy="0" r="11.200"/><circle cx="-4.100" cy="-3.000" r="1.350" fill="#cecece" stroke="none"/><circle cx="4.100" cy="-3.000" r="1.350" fill="#cecece" stroke="none"/><path d="M-5.600 5.600C-4.600 2.800 -2.400 1.800 0 1.800C2.400 1.800 4.600 2.800 5.600 5.600Z" fill="#cecece" stroke="none"/></svg>
<svg class="ic" style="left:1556.20px;top:928.80px" width="32" height="32" viewBox="-16 -16 32 32" fill="none" stroke="#cecece" stroke-width="2.3" stroke-linecap="round" stroke-linejoin="round"><rect x="-8.6" y="-8.6" width="17.2" height="17.2" rx="2"/><path d="M-3.2 -8.6v-3M-3.2 8.6v3M-8.6 -3.2h-3M8.6 -3.2h3" stroke-width="2.500" stroke-linecap="butt"/><path d="M3.2 -8.6v-3M3.2 8.6v3M-8.6 3.2h-3M8.6 3.2h3" stroke-width="2.500" stroke-linecap="butt"/><rect x="-4.600" y="-1.400" width="10.000" height="5.600" rx="0.800" fill="#cecece" stroke="none"/></svg>
<div class="tl">
<span class="t" style="left:133.09px;top:18.00px;font-size:13.6px;color:#f2f2f3;-webkit-text-stroke:0.5px #f2f2f3;letter-spacing:-0.446px;">Shopping App</span>
<span class="t" style="left:219.83px;top:17.00px;font-size:10.5px;color:#e0e0e3;-webkit-text-stroke:0.4px #e0e0e3;letter-spacing:-0.389px;">|</span>
<span class="t" style="left:229.29px;top:18.00px;font-size:13.6px;color:#a3a4ab;-webkit-text-stroke:0.2px #a3a4ab;letter-spacing:-0.238px;">Production</span>
<span class="t" style="left:299.73px;top:17.00px;font-size:10.5px;color:#a3a4ab;-webkit-text-stroke:0.4px #a3a4ab;letter-spacing:-0.389px;">|</span>
<span class="t" style="left:308.99px;top:18.00px;font-size:13.6px;color:#a3a4ab;-webkit-text-stroke:0.2px #a3a4ab;letter-spacing:-0.276px;">Android</span>
<span class="t" style="left:1796.25px;top:19.00px;font-size:16.7px;color:#b4b5bb;-webkit-text-stroke:0.14px #b4b5bb;letter-spacing:-0.796px;">FAQ</span>
<span class="t" style="left:1868.55px;top:19.00px;font-size:16.7px;color:#b4b5bb;-webkit-text-stroke:0.14px #b4b5bb;letter-spacing:-0.979px;">DOCS</span>
<span class="t" style="left:24.09px;top:110.00px;font-size:12.5px;color:#a3a4ab;-webkit-text-stroke:0.32px #a3a4ab;letter-spacing:-0.142px;">App</span>
<span class="t" style="left:18.09px;top:177.00px;font-size:12.5px;color:#a3a4ab;-webkit-text-stroke:0.32px #a3a4ab;letter-spacing:-0.386px;">Issues</span>
<span class="t" style="left:16.44px;top:244.00px;font-size:12.5px;color:#a3a4ab;-webkit-text-stroke:0.32px #a3a4ab;letter-spacing:-0.414px;">Boards</span>
<span class="t" style="left:11.19px;top:311.00px;font-size:12.5px;color:#a3a4ab;-webkit-text-stroke:0.32px #a3a4ab;letter-spacing:-0.389px;">Sessions</span>
<span class="t" style="left:17.94px;top:378.00px;font-size:12.5px;color:#a3a4ab;-webkit-text-stroke:0.32px #a3a4ab;letter-spacing:-0.544px;">Debug</span>
<span class="t" style="left:13.44px;top:445.00px;font-size:12.5px;color:#a3a4ab;-webkit-text-stroke:0.32px #a3a4ab;letter-spacing:-0.489px;">Crashes</span>
<span class="t" style="left:18.44px;top:512.00px;font-size:12.5px;color:#a3a4ab;-webkit-text-stroke:0.32px #a3a4ab;letter-spacing:-0.746px;">OOMs</span>
<span class="t" style="left:20.19px;top:580.00px;font-size:12.5px;color:#a3a4ab;-webkit-text-stroke:0.32px #a3a4ab;letter-spacing:-0.758px;">ANRs</span>
<span class="t" style="left:27.69px;top:647.00px;font-size:12.5px;color:#a3a4ab;-webkit-text-stroke:0.32px #a3a4ab;letter-spacing:-1.023px;">UT</span>
<span class="t" style="left:12.44px;top:714.00px;font-size:12.5px;color:#ffffff;-webkit-text-stroke:0.4px #ffffff;letter-spacing:-0.103px;">Network</span>
<span class="t" style="left:21.69px;top:781.00px;font-size:12.5px;color:#a3a4ab;-webkit-text-stroke:0.32px #a3a4ab;letter-spacing:-0.121px;">Logs</span>
<span class="t" style="left:10.19px;top:848.00px;font-size:12.5px;color:#a3a4ab;-webkit-text-stroke:0.32px #a3a4ab;letter-spacing:-0.254px;">Moments</span>
<span class="t" style="left:13.44px;top:915.00px;font-size:12.5px;color:#a3a4ab;-webkit-text-stroke:0.32px #a3a4ab;letter-spacing:-0.391px;">Screens</span>
<span class="t" style="left:93.57px;top:83.00px;font-size:16.3px;color:#9e9e9e;-webkit-text-stroke:0.55px #9e9e9e;letter-spacing:0.550px;">Network Monitoring</span>
<span class="t" style="left:285.57px;top:83.00px;font-size:16.3px;color:#212121;-webkit-text-stroke:0.6px #212121;letter-spacing:0.281px;">Path Details</span>
<span class="t" style="left:1734.24px;top:83.00px;font-size:14.7px;color:#757575;-webkit-text-stroke:0.2px #757575;letter-spacing:-0.122px;">Last 7 Days</span>
<span class="t" style="left:1874.64px;top:83.00px;font-size:14.7px;color:#757575;-webkit-text-stroke:0.2px #757575;letter-spacing:0.186px;">Top Versions</span>
<span class="t" style="left:110.05px;top:139.00px;font-size:14.4px;color:#212121;font-weight:700;letter-spacing:-0.098px;">Status</span>
<span class="t" style="left:1014.85px;top:139.00px;font-size:14.4px;color:#757575;font-weight:700;letter-spacing:-0.172px;">Performance</span>
<span class="t" style="left:93.56px;top:196.00px;font-size:20.9px;color:#212121;-webkit-text-stroke:0.14px #212121;letter-spacing:-0.074px;">POST app.scalyr.com/addEvents 401</span>
<span class="t" style="left:190.46px;top:255.00px;font-size:16.5px;color:#333;-webkit-text-stroke:0.6px #333;letter-spacing:-0.042px;">Error Code</span>
<span class="t" style="left:188.05px;top:303.00px;font-size:16.7px;color:#212121;-webkit-text-stroke:0.14px #212121;letter-spacing:0.075px;">401 (Unauthorized)</span>
<span class="t" style="left:885.25px;top:303.00px;font-size:16.7px;color:#212121;-webkit-text-stroke:0.14px #212121;letter-spacing:0.147px;">1,312</span>
<span class="t" style="left:188.05px;top:345.00px;font-size:16.7px;color:#212121;-webkit-text-stroke:0.14px #212121;letter-spacing:-0.034px;">400 (Bad Request)</span>
<span class="t" style="left:918.25px;top:345.00px;font-size:16.7px;color:#212121;-webkit-text-stroke:0.14px #212121;letter-spacing:-1.500px;">1</span>
<span class="t" style="left:174.26px;top:412.00px;font-size:16.5px;color:#333;-webkit-text-stroke:0.6px #333;letter-spacing:0.141px;">Connection Error</span>
<span class="t" style="left:171.75px;top:460.00px;font-size:16.7px;color:#212121;-webkit-text-stroke:0.14px #212121;letter-spacing:0.060px;">java.net.UnknownHostException</span>
<span class="t" style="left:933.25px;top:460.00px;font-size:16.7px;color:#212121;-webkit-text-stroke:0.14px #212121;letter-spacing:0.722px;">6</span>
<span class="t" style="left:171.75px;top:501.00px;font-size:16.7px;color:#212121;-webkit-text-stroke:0.14px #212121;letter-spacing:0.019px;">java.net.ConnectException</span>
<span class="t" style="left:934.25px;top:501.00px;font-size:16.7px;color:#212121;-webkit-text-stroke:0.14px #212121;letter-spacing:-1.500px;">1</span>
<span class="t" style="left:171.75px;top:543.00px;font-size:16.7px;color:#212121;-webkit-text-stroke:0.14px #212121;letter-spacing:-0.050px;">javax.net.ssl.SSLException</span>
<span class="t" style="left:934.25px;top:543.00px;font-size:16.7px;color:#212121;-webkit-text-stroke:0.14px #212121;letter-spacing:-1.500px;">1</span>
<span class="t" style="left:1076.76px;top:274.00px;font-size:16.5px;color:#333;-webkit-text-stroke:0.6px #333;letter-spacing:0.221px;">401 Requests</span>
<span class="t" style="left:1535.55px;top:303.00px;font-size:16.7px;color:#212121;-webkit-text-stroke:0.14px #212121;letter-spacing:0.211px;">2xx</span>
<span class="t" style="left:1591.45px;top:303.00px;font-size:16.7px;color:#212121;-webkit-text-stroke:0.14px #212121;letter-spacing:0.165px;">2xx (Incomplete)</span>
<span class="t" style="left:1745.95px;top:303.00px;font-size:16.7px;color:#212121;-webkit-text-stroke:0.14px #212121;letter-spacing:-0.014px;">401</span>
<span class="t" style="left:1803.65px;top:303.00px;font-size:16.7px;color:#212121;-webkit-text-stroke:0.14px #212121;letter-spacing:0.204px;">401 (Incomplete)</span>
<span class="t" style="left:1129.83px;top:482.00px;font-size:12.6px;color:#616161;-webkit-text-stroke:0.14px #616161;letter-spacing:1.018px;">0</span>
<span class="t" style="left:1129.83px;top:457.00px;font-size:12.6px;color:#616161;-webkit-text-stroke:0.14px #616161;letter-spacing:1.018px;">5</span>
<span class="t" style="left:1122.93px;top:431.00px;font-size:12.6px;color:#616161;-webkit-text-stroke:0.14px #616161;letter-spacing:0.459px;">10</span>
<span class="t" style="left:1122.93px;top:406.00px;font-size:12.6px;color:#616161;-webkit-text-stroke:0.14px #616161;letter-spacing:0.459px;">15</span>
<span class="t" style="left:1122.93px;top:380.00px;font-size:12.6px;color:#616161;-webkit-text-stroke:0.14px #616161;letter-spacing:0.459px;">20</span>
<span class="t" style="left:1122.93px;top:355.00px;font-size:12.6px;color:#616161;-webkit-text-stroke:0.14px #616161;letter-spacing:0.459px;">25</span>
<span class="t" style="left:1127.53px;top:495.00px;font-size:12.6px;color:#6a6a6a;-webkit-text-stroke:0.14px #6a6a6a;letter-spacing:-0.029px;">Oct 27</span>
<span class="t" style="left:1188.68px;top:495.00px;font-size:12.6px;color:#6a6a6a;-webkit-text-stroke:0.14px #6a6a6a;letter-spacing:-0.076px;">Oct 28, 09:00</span>
<span class="t" style="left:1291.98px;top:495.00px;font-size:12.6px;color:#6a6a6a;-webkit-text-stroke:0.14px #6a6a6a;letter-spacing:-0.076px;">Oct 29, 07:00</span>
<span class="t" style="left:1390.83px;top:495.00px;font-size:12.6px;color:#6a6a6a;-webkit-text-stroke:0.14px #6a6a6a;letter-spacing:-0.029px;">Oct 30</span>
<span class="t" style="left:1451.98px;top:495.00px;font-size:12.6px;color:#6a6a6a;-webkit-text-stroke:0.14px #6a6a6a;letter-spacing:-0.076px;">Oct 30, 17:00</span>
<span class="t" style="left:1555.48px;top:495.00px;font-size:12.6px;color:#6a6a6a;-webkit-text-stroke:0.14px #6a6a6a;letter-spacing:-0.076px;">Oct 31, 15:00</span>
<span class="t" style="left:1661.48px;top:495.00px;font-size:12.6px;color:#6a6a6a;-webkit-text-stroke:0.14px #6a6a6a;letter-spacing:-0.149px;">Nov 1, 13:00</span>
<span class="t" style="left:1760.18px;top:495.00px;font-size:12.6px;color:#6a6a6a;-webkit-text-stroke:0.14px #6a6a6a;letter-spacing:-0.149px;">Nov 2, 10:00</span>
<span class="t" style="left:1584.89px;top:527.00px;font-size:13.6px;color:#616161;font-style:italic;-webkit-text-stroke:0.14px #616161;letter-spacing:-0.052px;">The dashed line indicates data that are still being collected.</span>
<span class="t" style="left:93.36px;top:627.00px;font-size:20.8px;color:#212121;-webkit-text-stroke:0.8px #212121;letter-spacing:0.235px;">Sessions</span>
<span class="t" style="left:1786.97px;top:625.00px;font-size:14.1px;color:#bdbdbd;-webkit-text-stroke:0.5px #bdbdbd;letter-spacing:0.229px;">Device</span>
<span class="t" style="left:1887.77px;top:625.00px;font-size:14.1px;color:#bdbdbd;-webkit-text-stroke:0.5px #bdbdbd;letter-spacing:0.167px;">OS Version</span>
<span class="t" style="left:105.86px;top:692.00px;font-size:16.4px;color:#333;-webkit-text-stroke:0.75px #333;letter-spacing:0.338px;">Date</span>
<span class="t" style="left:252.14px;top:692.00px;font-size:14.7px;color:#333;font-weight:700;letter-spacing:-0.023px;">Time</span>
<span class="t" style="left:471.14px;top:692.00px;font-size:14.7px;color:#333;font-weight:700;letter-spacing:-0.337px;">User</span>
<span class="t" style="left:846.76px;top:692.00px;font-size:16.4px;color:#333;-webkit-text-stroke:0.75px #333;letter-spacing:0.135px;">App</span>
<span class="t" style="left:943.96px;top:692.00px;font-size:16.4px;color:#333;-webkit-text-stroke:0.75px #333;letter-spacing:0.359px;">State</span>
<span class="t" style="left:1040.66px;top:692.00px;font-size:16.4px;color:#333;-webkit-text-stroke:0.75px #333;letter-spacing:0.211px;">Device</span>
<span class="t" style="left:1228.76px;top:692.00px;font-size:16.4px;color:#333;-webkit-text-stroke:0.75px #333;letter-spacing:-0.356px;">OS</span>
<span class="t" style="left:1326.06px;top:692.00px;font-size:16.4px;color:#333;-webkit-text-stroke:0.75px #333;letter-spacing:0.417px;">Issues</span>
<span class="t" style="left:1608.06px;top:692.00px;font-size:16.4px;color:#333;-webkit-text-stroke:0.75px #333;letter-spacing:0.414px;">Path</span>
<span class="t" style="left:104.05px;top:742.00px;font-size:16.7px;color:#212121;-webkit-text-stroke:0.14px #212121;letter-spacing:-0.145px;">Nov 3, 2022</span>
<span class="t" style="left:250.25px;top:742.00px;font-size:16.7px;color:#212121;-webkit-text-stroke:0.14px #212121;letter-spacing:-0.173px;">15:21</span>
<span class="t" style="left:321.55px;top:742.00px;font-size:16.7px;color:#212121;-webkit-text-stroke:0.14px #212121;letter-spacing:0.261px;">6m 17s</span>
<span class="t" style="left:469.25px;top:742.00px;font-size:16.7px;color:#212121;-webkit-text-stroke:0.14px #212121;letter-spacing:-0.361px;">17B00D5132FACE79C57FCC5CF29CB39A</span>
<span class="t" style="left:844.55px;top:742.00px;font-size:16.7px;color:#212121;-webkit-text-stroke:0.14px #212121;letter-spacing:0.207px;">3.197</span>
<span class="t" style="left:1039.45px;top:742.00px;font-size:16.7px;color:#212121;-webkit-text-stroke:0.14px #212121;letter-spacing:0.014px;">Huawei Honor 7A</span>
<span class="t" style="left:1227.25px;top:742.00px;font-size:16.7px;color:#212121;-webkit-text-stroke:0.14px #212121;letter-spacing:-0.024px;">8.0.0</span>
<span class="t" style="left:1605.75px;top:742.00px;font-size:16.7px;color:#212121;-webkit-text-stroke:0.14px #212121;letter-spacing:0.160px;">/addEvents</span>
<span class="t" style="left:104.05px;top:789.00px;font-size:16.7px;color:#212121;-webkit-text-stroke:0.14px #212121;letter-spacing:-0.145px;">Nov 3, 2022</span>
<span class="t" style="left:250.25px;top:789.00px;font-size:16.7px;color:#212121;-webkit-text-stroke:0.14px #212121;letter-spacing:-0.173px;">15:20</span>
<span class="t" style="left:321.55px;top:789.00px;font-size:16.7px;color:#212121;-webkit-text-stroke:0.14px #212121;letter-spacing:0.266px;">44s</span>
<span class="t" style="left:469.25px;top:789.00px;font-size:16.7px;color:#212121;-webkit-text-stroke:0.14px #212121;letter-spacing:-0.156px;">5AF846655FAA998D70609B97DBE771A6</span>
<span class="t" style="left:844.55px;top:789.00px;font-size:16.7px;color:#212121;-webkit-text-stroke:0.14px #212121;letter-spacing:0.207px;">3.196</span>
<span class="t" style="left:1039.45px;top:789.00px;font-size:16.7px;color:#212121;-webkit-text-stroke:0.14px #212121;letter-spacing:0.065px;">Xiaomi Mi 10T</span>
<span class="t" style="left:1227.25px;top:789.00px;font-size:16.7px;color:#212121;-webkit-text-stroke:0.14px #212121;letter-spacing:0.220px;">12</span>
<span class="t" style="left:1605.75px;top:789.00px;font-size:16.7px;color:#212121;-webkit-text-stroke:0.14px #212121;letter-spacing:0.160px;">/addEvents</span>
<span class="t" style="left:104.05px;top:837.00px;font-size:16.7px;color:#212121;-webkit-text-stroke:0.14px #212121;letter-spacing:-0.145px;">Nov 3, 2022</span>
<span class="t" style="left:250.25px;top:837.00px;font-size:16.7px;color:#212121;-webkit-text-stroke:0.14px #212121;letter-spacing:-0.173px;">15:02</span>
<span class="t" style="left:321.55px;top:837.00px;font-size:16.7px;color:#212121;-webkit-text-stroke:0.14px #212121;letter-spacing:0.261px;">2m 15s</span>
<span class="t" style="left:469.25px;top:837.00px;font-size:16.7px;color:#212121;-webkit-text-stroke:0.14px #212121;letter-spacing:-0.192px;">607315024DF8B00F57E5B446E949CD56</span>
<span class="t" style="left:844.55px;top:837.00px;font-size:16.7px;color:#212121;-webkit-text-stroke:0.14px #212121;letter-spacing:0.207px;">3.196</span>
<span class="t" style="left:1039.45px;top:837.00px;font-size:16.7px;color:#212121;-webkit-text-stroke:0.14px #212121;letter-spacing:-0.090px;">Oppo CPH2113</span>
<span class="t" style="left:1227.25px;top:837.00px;font-size:16.7px;color:#212121;-webkit-text-stroke:0.14px #212121;letter-spacing:0.220px;">12</span>
<span class="t" style="left:1605.75px;top:837.00px;font-size:16.7px;color:#212121;-webkit-text-stroke:0.14px #212121;letter-spacing:0.160px;">/addEvents</span>
<span class="t" style="left:104.05px;top:884.00px;font-size:16.7px;color:#212121;-webkit-text-stroke:0.14px #212121;letter-spacing:-0.145px;">Nov 3, 2022</span>
<span class="t" style="left:250.25px;top:884.00px;font-size:16.7px;color:#212121;-webkit-text-stroke:0.14px #212121;letter-spacing:-0.173px;">14:25</span>
<span class="t" style="left:321.55px;top:884.00px;font-size:16.7px;color:#212121;-webkit-text-stroke:0.14px #212121;letter-spacing:0.261px;">1m 20s</span>
<span class="t" style="left:469.25px;top:884.00px;font-size:16.7px;color:#212121;-webkit-text-stroke:0.14px #212121;letter-spacing:-0.158px;">1F012457D3B6258C4DDF00200639A5E5</span>
<span class="t" style="left:844.55px;top:884.00px;font-size:16.7px;color:#212121;-webkit-text-stroke:0.14px #212121;letter-spacing:0.207px;">3.196</span>
<span class="t" style="left:1039.45px;top:884.00px;font-size:16.7px;color:#212121;-webkit-text-stroke:0.14px #212121;letter-spacing:-0.014px;">Xiaomi Redmi Note 4</span>
<span class="t" style="left:1227.25px;top:884.00px;font-size:16.7px;color:#212121;-webkit-text-stroke:0.14px #212121;letter-spacing:-0.067px;">7.0</span>
<span class="t" style="left:1605.75px;top:884.00px;font-size:16.7px;color:#212121;-webkit-text-stroke:0.14px #212121;letter-spacing:0.160px;">/addEvents</span>
</div>
<div class="r" style="left:0;top:936px;width:1996px;height:2px;background:#e2e2e2"></div>
<div class="r" style="left:1900.2px;top:858.8px;width:58px;height:58.4px;border-radius:50%;background:#f26b46;box-shadow:0 1px 7px rgba(0,0,0,0.20)"></div>
<svg class="ic" style="left:1900px;top:858px" width="60" height="60" viewBox="1900 858 60 60"><path d="M1920.100 876.600h17.700a3.700 3.700 0 0 1 3.700 3.700v10.300a3.700 3.700 0 0 1-3.700 3.700h-15.300l-6.100 5.400v-19.400a3.700 3.700 0 0 1 3.700-3.700z" fill="#f6f4f3"/></svg>
</body></html>
